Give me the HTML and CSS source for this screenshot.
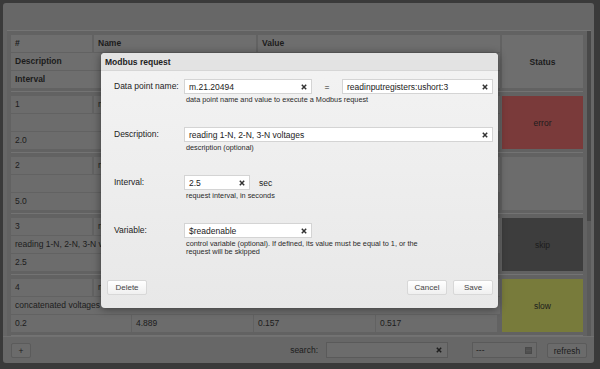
FILE: index.html
```html
<!DOCTYPE html>
<html lang="en">
<head>
    <meta charset="UTF-8">
    <title>Modbus requests</title>
    <link rel="stylesheet" href="styles.css">
</head>
<body>
    <div class="window">
        <div class="table-area">
            <div class="records">
                <div class="record head">
                    <div class="cell c-num">#</div>
                    <div class="cell c-name">Name</div>
                    <div class="cell c-value">Value</div>
                    <div class="cell c-desc">Description</div>
                    <div class="cell c-line3">Interval</div>
                    <div class="status">Status</div>
                </div>
                <div class="record">
                    <div class="cell c-num">1</div>
                    <div class="cell c-name">m.21.20494</div>
                    <div class="cell c-value"></div>
                    <div class="cell c-desc"></div>
                    <div class="line3">
                        <div class="cell">2.0</div>
                        <div class="cell"></div>
                        <div class="cell"></div>
                        <div class="cell"></div>
                    </div>
                    <div class="status error">error</div>
                </div>
                <div class="record">
                    <div class="cell c-num">2</div>
                    <div class="cell c-name">m.21.20498</div>
                    <div class="cell c-value"></div>
                    <div class="cell c-desc"></div>
                    <div class="line3">
                        <div class="cell">5.0</div>
                        <div class="cell"></div>
                        <div class="cell"></div>
                        <div class="cell"></div>
                    </div>
                    <div class="status"></div>
                </div>
                <div class="record">
                    <div class="cell c-num">3</div>
                    <div class="cell c-name">m.21.20494</div>
                    <div class="cell c-value"></div>
                    <div class="cell c-desc">reading 1-N, 2-N, 3-N voltages</div>
                    <div class="line3">
                        <div class="cell">2.5</div>
                        <div class="cell"></div>
                        <div class="cell"></div>
                        <div class="cell"></div>
                    </div>
                    <div class="status skip">skip</div>
                </div>
                <div class="record">
                    <div class="cell c-num">4</div>
                    <div class="cell c-name">m.21.20500</div>
                    <div class="cell c-value"></div>
                    <div class="cell c-desc">concatenated voltages</div>
                    <div class="line3">
                        <div class="cell">0.2</div>
                        <div class="cell">4.889</div>
                        <div class="cell">0.157</div>
                        <div class="cell">0.517</div>
                    </div>
                    <div class="status slow">slow</div>
                </div>
            </div>
            <div class="scrollbar"><div class="thumb"></div></div>
        </div>
        <div class="toolbar">
            <div class="tool-btn add-btn">+</div>
            <span class="search-label">search:</span>
            <div class="search-box">
                <svg class="clear" width="6" height="6" viewBox="0 0 6 6"><path d="M0.8 0.8L5.2 5.2M5.2 0.8L0.8 5.2" stroke="#1e1e1e" stroke-width="1.5"/></svg>
            </div>
            <div class="select-box">
                <span>---</span>
                <svg class="select-icon" width="7" height="7" viewBox="0 0 7 7"><rect x="0" y="0" width="7" height="7" fill="#4a4a4a"/><path d="M1 2H6M1 3.5H6M1 5H6" stroke="#5a5a5a" stroke-width="0.8"/></svg>
            </div>
            <div class="tool-btn refresh-btn">refresh</div>
        </div>
    </div>

    <div class="modal">
        <div class="modal-header">Modbus request</div>
        <div class="modal-body">
            <div class="field">
                <label>Data point name:</label>
                <div class="field-main">
                    <div class="input-row">
                        <div class="input w-short"><span>m.21.20494</span>
                            <svg width="6" height="6" viewBox="0 0 6 6"><path d="M0.8 0.8L5.2 5.2M5.2 0.8L0.8 5.2" stroke="#333" stroke-width="1.5"/></svg>
                        </div>
                        <span class="equals">=</span>
                        <div class="input w-value"><span>readinputregisters:ushort:3</span>
                            <svg width="6" height="6" viewBox="0 0 6 6"><path d="M0.8 0.8L5.2 5.2M5.2 0.8L0.8 5.2" stroke="#333" stroke-width="1.5"/></svg>
                        </div>
                    </div>
                    <div class="hint">data point name and value to execute a Modbus request</div>
                </div>
            </div>
            <div class="field">
                <label>Description:</label>
                <div class="field-main">
                    <div class="input w-long"><span>reading 1-N, 2-N, 3-N voltages</span>
                        <svg width="6" height="6" viewBox="0 0 6 6"><path d="M0.8 0.8L5.2 5.2M5.2 0.8L0.8 5.2" stroke="#333" stroke-width="1.5"/></svg>
                    </div>
                    <div class="hint">description (optional)</div>
                </div>
            </div>
            <div class="field">
                <label>Interval:</label>
                <div class="field-main">
                    <div class="input-row">
                        <div class="input w-tiny"><span>2.5</span>
                            <svg width="6" height="6" viewBox="0 0 6 6"><path d="M0.8 0.8L5.2 5.2M5.2 0.8L0.8 5.2" stroke="#333" stroke-width="1.5"/></svg>
                        </div>
                        <span class="unit">sec</span>
                    </div>
                    <div class="hint">request interval, in seconds</div>
                </div>
            </div>
            <div class="field">
                <label>Variable:</label>
                <div class="field-main">
                    <div class="input w-short"><span>$readenable</span>
                        <svg width="6" height="6" viewBox="0 0 6 6"><path d="M0.8 0.8L5.2 5.2M5.2 0.8L0.8 5.2" stroke="#333" stroke-width="1.5"/></svg>
                    </div>
                    <div class="hint">control variable (optional). If defined, its value must be equal to 1, or the<br>request will be skipped</div>
                </div>
            </div>
        </div>
        <div class="modal-footer">
            <div class="btn">Delete</div>
            <div class="btn">Cancel</div>
            <div class="btn">Save</div>
        </div>
    </div>
</body>
</html>
```

FILE: styles.css
```css
body {
    font-family: "Liberation Sans", Arial, sans-serif;
    font-size: 8.5px;
    margin: 0;
    padding: 3px;
    background-color: #3a3a3a;
    color: #1c1c1c;
    height: 363px;
    box-sizing: border-box;
}
.window {
    width: 591px;
    height: 360px;
    background: #676767;
    border-radius: 3px;
    padding-top: 27px;
    box-sizing: border-box;
    display: flex;
    flex-direction: column;
}
.table-area {
    margin: 0 3px 0 4px;
    border-top: 1px solid #747474;
    background: #626262;
    display: flex;
    height: 305px;
}
.records {
    width: 580px;
    padding: 0 4px;
    box-sizing: border-box;
}
.record {
    display: grid;
    grid-template-columns: 81px 162px 242px 81px;
    grid-template-rows: 17px 17px 17px;
    column-gap: 2px;
    row-gap: 1px;
    padding: 4px 0 3px;
    border-bottom: 1px solid #737373;
}
.cell {
    background: #6c6c6c;
    padding-left: 4px;
    line-height: 17px;
    white-space: nowrap;
    overflow: hidden;
}
.head .cell {
    font-weight: bold;
    background: #6e6e6e;
}
.c-desc,
.c-line3 {
    grid-column: 1 / 4;
}
.line3 {
    grid-column: 1 / 4;
    display: grid;
    grid-template-columns: 120px 121px 121px 121px;
    column-gap: 1px;
}
.status {
    grid-column: 4;
    grid-row: 1 / 4;
    background: #6c6c6c;
    display: flex;
    align-items: center;
    justify-content: center;
}
.head .status {
    font-weight: bold;
    background: #6e6e6e;
}
.status.error {
    background: #7a3a3a;
}
.status.skip {
    background: #3d3d3d;
}
.status.slow {
    background: #787b3b;
}
.scrollbar {
    width: 4px;
    background: #5a5a5a;
}
.thumb {
    height: 190px;
    background: #484848;
}
.toolbar {
    flex: 1;
    border-top: 1px solid #717171;
    display: flex;
    align-items: center;
    padding: 0 7px 0 8px;
}
.tool-btn {
    height: 15px;
    line-height: 15px;
    background: #6b6b6b;
    border: 1px solid #5b5b5b;
    border-radius: 2px;
    box-sizing: border-box;
    text-align: center;
}
.add-btn {
    width: 20px;
}
.search-label {
    margin-left: auto;
    margin-right: 8px;
}
.search-box {
    width: 122px;
    height: 16px;
    background: #6c6c6c;
    border: 1px solid #5a5a5a;
    box-sizing: border-box;
    display: flex;
    align-items: center;
    justify-content: flex-end;
    padding-right: 5px;
}
.select-box {
    width: 65px;
    height: 16px;
    margin-left: 24px;
    background: #6a6a6a;
    border: 1px solid #5a5a5a;
    box-sizing: border-box;
    display: flex;
    align-items: center;
    justify-content: space-between;
    padding: 0 4px 0 3px;
}
.refresh-btn {
    width: 40px;
    margin-left: 10px;
}

/* modal */
.modal {
    position: absolute;
    left: 101px;
    top: 53px;
    width: 397px;
    height: 255px;
    background: linear-gradient(#f3f3f3, #e8e8e8);
    border-radius: 4px;
    box-shadow: 0 1px 8px rgba(0,0,0,0.45);
    color: #222;
    overflow: hidden;
}
.modal-header {
    height: 18px;
    line-height: 18px;
    padding-left: 4px;
    font-weight: bold;
    background: #e3e3e3;
    border-bottom: 1px solid #d6d6d6;
    box-sizing: border-box;
}
.modal-body {
    padding: 8px 0 0 13px;
}
.field {
    display: flex;
    height: 48px;
}
.field label {
    width: 70px;
    line-height: 15px;
    font-size: 8.5px;
}
.input-row {
    display: flex;
    align-items: center;
}
.input {
    height: 15px;
    background: #fff;
    border: 1px solid #d4d4d4;
    box-sizing: border-box;
    display: flex;
    align-items: center;
    justify-content: space-between;
    padding: 0 4px 0 4px;
    font-size: 8.5px;
}
.w-short {
    width: 128px;
}
.w-value {
    width: 151px;
}
.w-long {
    width: 309px;
}
.w-tiny {
    width: 66px;
}
.equals {
    width: 30px;
    text-align: center;
}
.unit {
    margin-left: 9px;
}
.hint {
    font-size: 7.3px;
    line-height: 7.5px;
    margin-top: 2px;
    padding-left: 2px;
    color: #2a2a2a;
}
.modal-footer {
    display: flex;
    gap: 6px;
    padding: 9px 5px 0 6px;
}
.btn {
    width: 40px;
    height: 15px;
    line-height: 14px;
    text-align: center;
    background: linear-gradient(#ffffff, #f0f0f0);
    border: 1px solid #d8d8d8;
    border-radius: 2px;
    box-sizing: border-box;
    font-size: 8px;
    color: #444;
}
.btn:first-child {
    margin-right: auto;
}
```
